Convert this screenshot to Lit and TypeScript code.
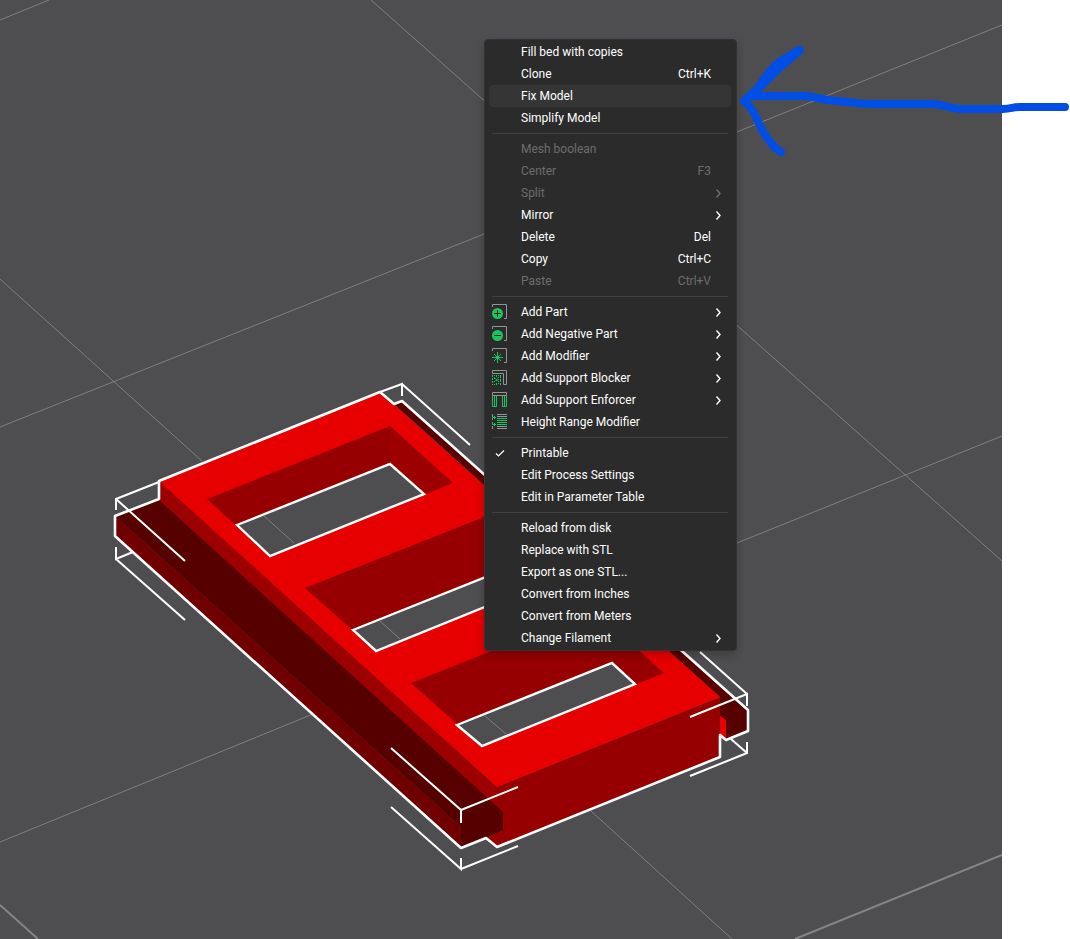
import { LitElement, html, css, svg, nothing, type TemplateResult } from "lit";
import { customElement, property } from "lit/decorators.js";

type Entry = {
  label: string;
  keys?: string;
  icon?: string;
  submenu?: boolean;
  disabled?: boolean;
  active?: boolean;
  checked?: boolean;
};

const GROUPS: Entry[][] = [
  [
    { label: "Fill bed with copies" },
    { label: "Clone", keys: "Ctrl+K" },
    { label: "Fix Model", active: true },
    { label: "Simplify Model" },
  ],
  [
    { label: "Mesh boolean", disabled: true },
    { label: "Center", keys: "F3", disabled: true },
    { label: "Split", submenu: true, disabled: true },
    { label: "Mirror", submenu: true },
    { label: "Delete", keys: "Del" },
    { label: "Copy", keys: "Ctrl+C" },
    { label: "Paste", keys: "Ctrl+V", disabled: true },
  ],
  [
    { label: "Add Part", icon: "part", submenu: true },
    { label: "Add Negative Part", icon: "negative", submenu: true },
    { label: "Add Modifier", icon: "modifier", submenu: true },
    { label: "Add Support Blocker", icon: "blocker", submenu: true },
    { label: "Add Support Enforcer", icon: "enforcer", submenu: true },
    { label: "Height Range Modifier", icon: "range" },
  ],
  [
    { label: "Printable", icon: "check", checked: true },
    { label: "Edit Process Settings" },
    { label: "Edit in Parameter Table" },
  ],
  [
    { label: "Reload from disk" },
    { label: "Replace with STL" },
    { label: "Export as one STL..." },
    { label: "Convert from Inches" },
    { label: "Convert from Meters" },
    { label: "Change Filament", submenu: true },
  ],
];

const frame = svg`<path class="grey" d="M.5 3V.5H14.5V14.5H12"/>`;

const ICONS: Record<string, TemplateResult> = {
  part: svg`${frame}<circle class="solid" cx="5.5" cy="9.5" r="5.5"/>
    <path class="cut" d="M5.5 6v7M2 9.5h7"/>`,
  negative: svg`${frame}<circle class="solid" cx="5.5" cy="9.5" r="5.5"/>
    <path class="cut" d="M2 9.5h7"/>`,
  modifier: svg`${frame}
    <path class="green" d="M5.5 4v11M0 9.5h11M2 6l7 7M9 6l-7 7"/>`,
  blocker: svg`<path class="grey" d="M.5 3.5V.5H14.5V14.5H11.5V3.5H.5"/>
    <path class="green" d="M.5 5v10" stroke-dasharray="2 1"/>
    <path class="green" d="M2.5 5v10" stroke-dasharray="1 2"/>
    <path class="green" d="M4.5 5v10" stroke-dasharray="2 2"/>
    <path class="green" d="M6.5 5v10" stroke-dasharray="1 1"/>
    <path class="green" d="M8.5 5v10" stroke-dasharray="3 1"/>
    <path class="green" d="M2 7l5 5M7 7l-5 5" stroke-dasharray="1 1"/>`,
  enforcer: svg`<path class="grey" d="M.5 .5H14.5V3.5H.5Z"/>
    <path class="green" d="M.5 4V14.5H4.5V4M2.5 4v10M10.5 4V14.5H14.5V4M12.5 4v10"/>`,
  range: svg`<path class="grey" d="M.5 0v3M.5 12v3M5 .5h10M5 2.5h10M5 12.5h10M5 14.5h10"/>
    <path class="green" d="M5 4.5h10M5 6.5h10M5 8.5h10M5 10.5h10M4 3.5H.5V6M.5 8v2.500H4M2.500 2v3M2.500 9v3"/>`,
  check: svg`<path class="tick" d="M4 8.500l2.500 2.500L12 5.500"/>`,
};

@customElement("menu-entry")
class MenuEntry extends LitElement {
  @property({ attribute: false }) entry!: Entry;

  static styles = css`
    :host {
      display: block;
    }
    .item {
      display: grid;
      grid-template-columns: 16px 1fr auto 15px;
      align-items: center;
      width: 100%;
      height: 22px;
      padding: 0 5px 0 3px;
      border: 0;
      border-radius: 4px;
      background: transparent;
      color: #fff;
      font: 12px/16px Roboto, sans-serif;
      text-align: left;
      white-space: nowrap;
    }
    .item:hover:enabled,
    .item.active {
      background: #353535;
    }
    .item:disabled {
      color: #6d6d6d;
    }
    .label {
      padding-left: 13px;
    }
    .icon {
      width: 16px;
      height: 16px;
      fill: none;
    }
    .chevron {
      width: 8px;
      height: 10px;
      margin-left: 4px;
      fill: none;
      stroke: currentColor;
      stroke-width: 1.4;
    }
    .grey {
      stroke: #949494;
    }
    .green {
      stroke: #1bc55e;
    }
    .solid {
      fill: #1bc55e;
    }
    .cut {
      stroke: #2b2b2b;
    }
    .tick {
      stroke: #fff;
      stroke-width: 1.2;
    }
  `;

  render() {
    const e = this.entry;
    const check = e.checked !== undefined;
    return html`<button
      type="button"
      class="item ${e.active ? "active" : ""}"
      role=${check ? "menuitemcheckbox" : "menuitem"}
      aria-checked=${check ? String(e.checked) : nothing}
      aria-haspopup=${e.submenu ? "menu" : nothing}
      ?disabled=${e.disabled}
    >
      <svg class="icon" viewBox="0 0 16 16" aria-hidden="true">${e.icon ? ICONS[e.icon] : nothing}</svg>
      <span class="label">${e.label}</span>
      <span>${e.keys ?? nothing}</span>
      ${e.submenu
        ? html`<svg class="chevron" viewBox="0 0 8 10" aria-hidden="true"><path d="M1.5 1.5L5 5.5L1.5 9.5" /></svg>`
        : nothing}
    </button>`;
  }
}

@customElement("object-menu")
class ObjectMenu extends LitElement {
  static styles = css`
    :host {
      display: block;
    }
    .menu {
      box-sizing: border-box;
      width: 253px;
      padding: 1px 5px 1px 4px;
      border: 1px solid #333333;
      border-radius: 4px;
      background: #2b2b2b;
      box-shadow: 0 4px 8px rgba(0, 0, 0, 0.2);
    }
    .rule {
      height: 1px;
      margin: 4px 3px;
      border: 0;
      background: #404040;
    }
  `;

  render() {
    return html`<div class="menu" role="menu" aria-label="Object">
      ${GROUPS.map(
        (group, i) => html`${i ? html`<hr class="rule" />` : nothing}
          ${group.map((entry) => html`<menu-entry .entry=${entry}></menu-entry>`)}`
      )}
    </div>`;
  }
}

@customElement("model-scene")
class ModelScene extends LitElement {
  static styles = css`
    :host {
      display: block;
    }
    .scene {
      display: block;
      width: 100%;
      height: 100%;
    }
    .grid {
      fill: none;
      stroke: #7f7f82;
      stroke-width: 1;
    }
    .bed {
      fill: none;
      stroke: #858587;
      stroke-width: 2;
    }
    .top {
      fill: #e60000;
    }
    .front {
      fill: #960000;
    }
    .side {
      fill: #9c0000;
    }
    .skirt {
      fill: #700000;
    }
    .ledge {
      fill: #570000;
    }
    .hole {
      fill: #4e4e50;
      stroke: #fff;
      stroke-width: 2.4;
    }
    .outline {
      fill: none;
      stroke: #fff;
      stroke-width: 2.6;
      stroke-linejoin: round;
    }
    .corner {
      fill: none;
      stroke: #fff;
      stroke-width: 2;
    }
  `;

  render() {
    return html`<svg class="scene" viewBox="0 0 1002 939" preserveAspectRatio="xMinYMin slice" role="img" aria-label="Model on print bed">
      <path class="grid" d="M0 20L49 0M0 427L484 234L1002 25M0 842L340 703M737 543L1002 436M371 0L1002 561M0 279L202 461M591 811L732 939" />
      <path class="bed" d="M0 905L38 939M795 939L1002 855" />

      <path class="ledge" d="M394 404L402 401L748 710V731L726 740L720 735V697Z" />
      <path class="top" d="M719 715L726 720V740L719 735Z" />
      <path class="skirt" d="M115 516L461 827V848L115 536Z" />
      <path class="ledge" d="M115 516L159 499L504 812V830L486 838L461 848V827Z" />
      <path class="side" d="M159 480L497 787L503 812L159 500Z" />
      <path class="front" d="M497 787L720 697V757L497 847L486 838L503 830V811L495 804V787Z" />
      <path class="top" d="M159 481L380 392L720 697L497 787Z" />

      <path class="front" d="M207 499L390 426V470L270 557Z" />
      <path class="side" d="M390 426L453 483L424 495L390 464Z" />
      <path class="front" d="M305 588L489 515L552 572L376 651Z" />
      <path class="front" d="M411 683L594 610L664 673L482 746Z" />
      <path class="hole" d="M237 525L390 464L424 494L270 556Z" />
      <path class="hole" d="M353 630L506 569L529 589L376 651Z" />
      <path class="hole" d="M457 725L612 663L635 684L482 746Z" />
      <path class="grid" d="M264 516L294 543M380 621L400 639M485 716L506 734" />

      <path class="outline" d="M159 481L380 392L394 404L402 401L748 710V731L726 740L720 735V757L497 847L486 838L461 848L115 536V516L159 499Z" />
      <path class="corner" d="M116 510V499L159 482M116 499L185 561M380 392L402 384V396M402 384L470 445M116 547V559L133 552M116 559L185 620M391 748L461 810V823M461 810L518 787M391 807L461 869V858M461 869L518 846M690 717L747 694V706M747 694L700 652M690 776L747 753V742M747 753L731 739" />
    </svg>`;
  }
}

@customElement("app-root")
class AppRoot extends LitElement {
  static styles = css`
    :host {
      display: block;
      background: #fff;
    }
    .page {
      position: relative;
      display: grid;
      grid-template-columns: 1fr 68px;
      height: 100vh;
      overflow: hidden;
    }
    .viewport {
      position: relative;
      min-width: 0;
      overflow: hidden;
      background: #4e4e50;
    }
    .canvas {
      height: 100%;
    }
    .popup {
      position: absolute;
      left: 484px;
      top: 39px;
    }
    .pointer {
      position: absolute;
      left: 736px;
      top: 40px;
      width: 334px;
      height: 120px;
      pointer-events: none;
    }
    .stroke {
      fill: none;
      stroke: #004ee6;
      stroke-width: 8;
      stroke-linecap: round;
      stroke-linejoin: round;
    }
    .blob {
      fill: #004ee6;
    }
  `;

  render() {
    return html`<main class="page">
      <section class="viewport">
        <model-scene class="canvas"></model-scene>
        <object-menu class="popup"></object-menu>
      </section>
      <svg class="pointer" viewBox="736 40 334 120" aria-hidden="true">
        <path class="stroke" d="M1065 107H1020C1013 107 1011 109 1003 109H962C950 109 944 104 932 104H872C860 104 850 102 837 101C820 100 815 96 804 96H750L744 101C751 107 753 111 757 119C762 132 772 147 781 152" />
        <path class="stroke" d="M744 101L757 89C763 80 768 73 775 67C783 60 793 55 800 50" />
        <path class="blob" d="M752 90C761 77 766 67 778 58L798 46L803 53L782 71L760 93Z" />
      </svg>
    </main>`;
  }
}
